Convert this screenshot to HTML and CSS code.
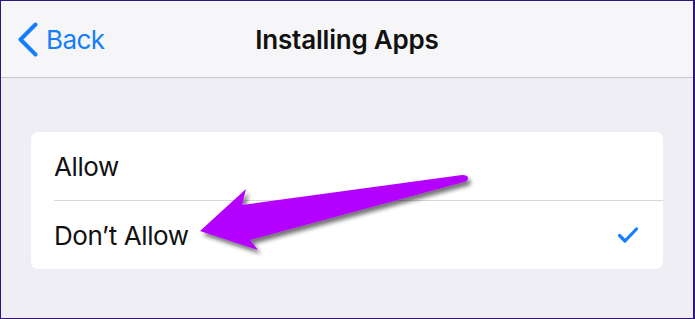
FILE: index.html
```html
<!DOCTYPE html>
<html lang="en">
<head>
    <meta charset="UTF-8">
    <title>Installing Apps</title>
    <link rel="stylesheet" href="styles.css">
</head>
<body>
    <div class="screen">
        <!-- Barra de navegación -->
        <header class="navbar">
            <a class="back" href="#">
                <svg class="chevron" width="20" height="35" viewBox="0 0 20 35">
                    <path d="M17.5 2.5 L2.5 17.5 L17.5 32.5" fill="none" stroke="#147efb" stroke-width="4" stroke-linecap="round" stroke-linejoin="round"/>
                </svg>
                <span>Back</span>
            </a>
            <h1 class="title">Installing Apps</h1>
            <span class="spacer"></span>
        </header>

        <!-- Opciones -->
        <main class="content">
            <ul class="options">
                <li class="option">Allow</li>
                <li class="option selected">
                    <span>Don’t Allow</span>
                    <svg class="check" width="22" height="18" viewBox="0 0 22 18">
                        <path d="M2.5 9.5 L8 15 L19.5 3" fill="none" stroke="#147efb" stroke-width="3.2" stroke-linecap="round" stroke-linejoin="round"/>
                    </svg>
                </li>
            </ul>
        </main>

        <!-- Flecha de anotación -->
        <svg class="annotation" width="695" height="319" viewBox="0 0 695 319">
            <defs>
                <filter id="shadow" x="-10%" y="-20%" width="130%" height="160%">
                    <feGaussianBlur in="SourceAlpha" stdDeviation="2"/>
                    <feOffset dx="3" dy="4" result="blur"/>
                    <feComponentTransfer><feFuncA type="linear" slope="0.55"/></feComponentTransfer>
                    <feMerge><feMergeNode/><feMergeNode in="SourceGraphic"/></feMerge>
                </filter>
            </defs>
            <path filter="url(#shadow)" fill="#b400ff"
                  d="M200 231 L246 189 L242 205 L462 175 Q468 175 468 178 Q468 181 464 182 L250 240 L258 250 Z"/>
        </svg>
    </div>
</body>
</html>
```

FILE: styles.css
```css
/* Estilos generales */
* {
    box-sizing: border-box;
    margin: 0;
    padding: 0;
}

body {
    font-family: Inter, "Noto Sans", sans-serif;
    background: #efeef4;
}

.screen {
    position: relative;
    width: 695px;
    height: 319px;
    border: 1px solid #2e1580;
    border-right-width: 2px;
    background: #efeef4;
    overflow: hidden;
}

/* Barra de navegación */
.navbar {
    height: 77px;
    background: #f6f6f8;
    border-bottom: 1px solid #c6c6ca;
    display: flex;
    align-items: center;
    justify-content: space-between;
    padding: 0 17px;
}

.back {
    display: flex;
    align-items: center;
    gap: 8px;
    color: #147efb;
    text-decoration: none;
    font-size: 26px;
    letter-spacing: -0.6px;
    width: 150px;
}

.chevron {
    display: block;
}

.title {
    font-size: 26px;
    font-weight: 600;
    color: #111;
    letter-spacing: -0.2px;
}

.spacer {
    width: 150px;
}

/* Lista de opciones */
.content {
    padding: 54px 30px 0 30px;
}

.options {
    list-style: none;
    background: #fff;
    border-radius: 7px;
    padding-left: 23px;
}

.option {
    height: 68px;
    display: flex;
    align-items: center;
    justify-content: space-between;
    padding-right: 24px;
    font-size: 26px;
    letter-spacing: -0.4px;
    color: #111;
}

.option + .option {
    height: 69px;
    border-top: 1px solid #d8d8dc;
}

.check {
    display: block;
}

/* Anotación */
.annotation {
    position: absolute;
    top: -1px;
    left: -1px;
    pointer-events: none;
}
```
